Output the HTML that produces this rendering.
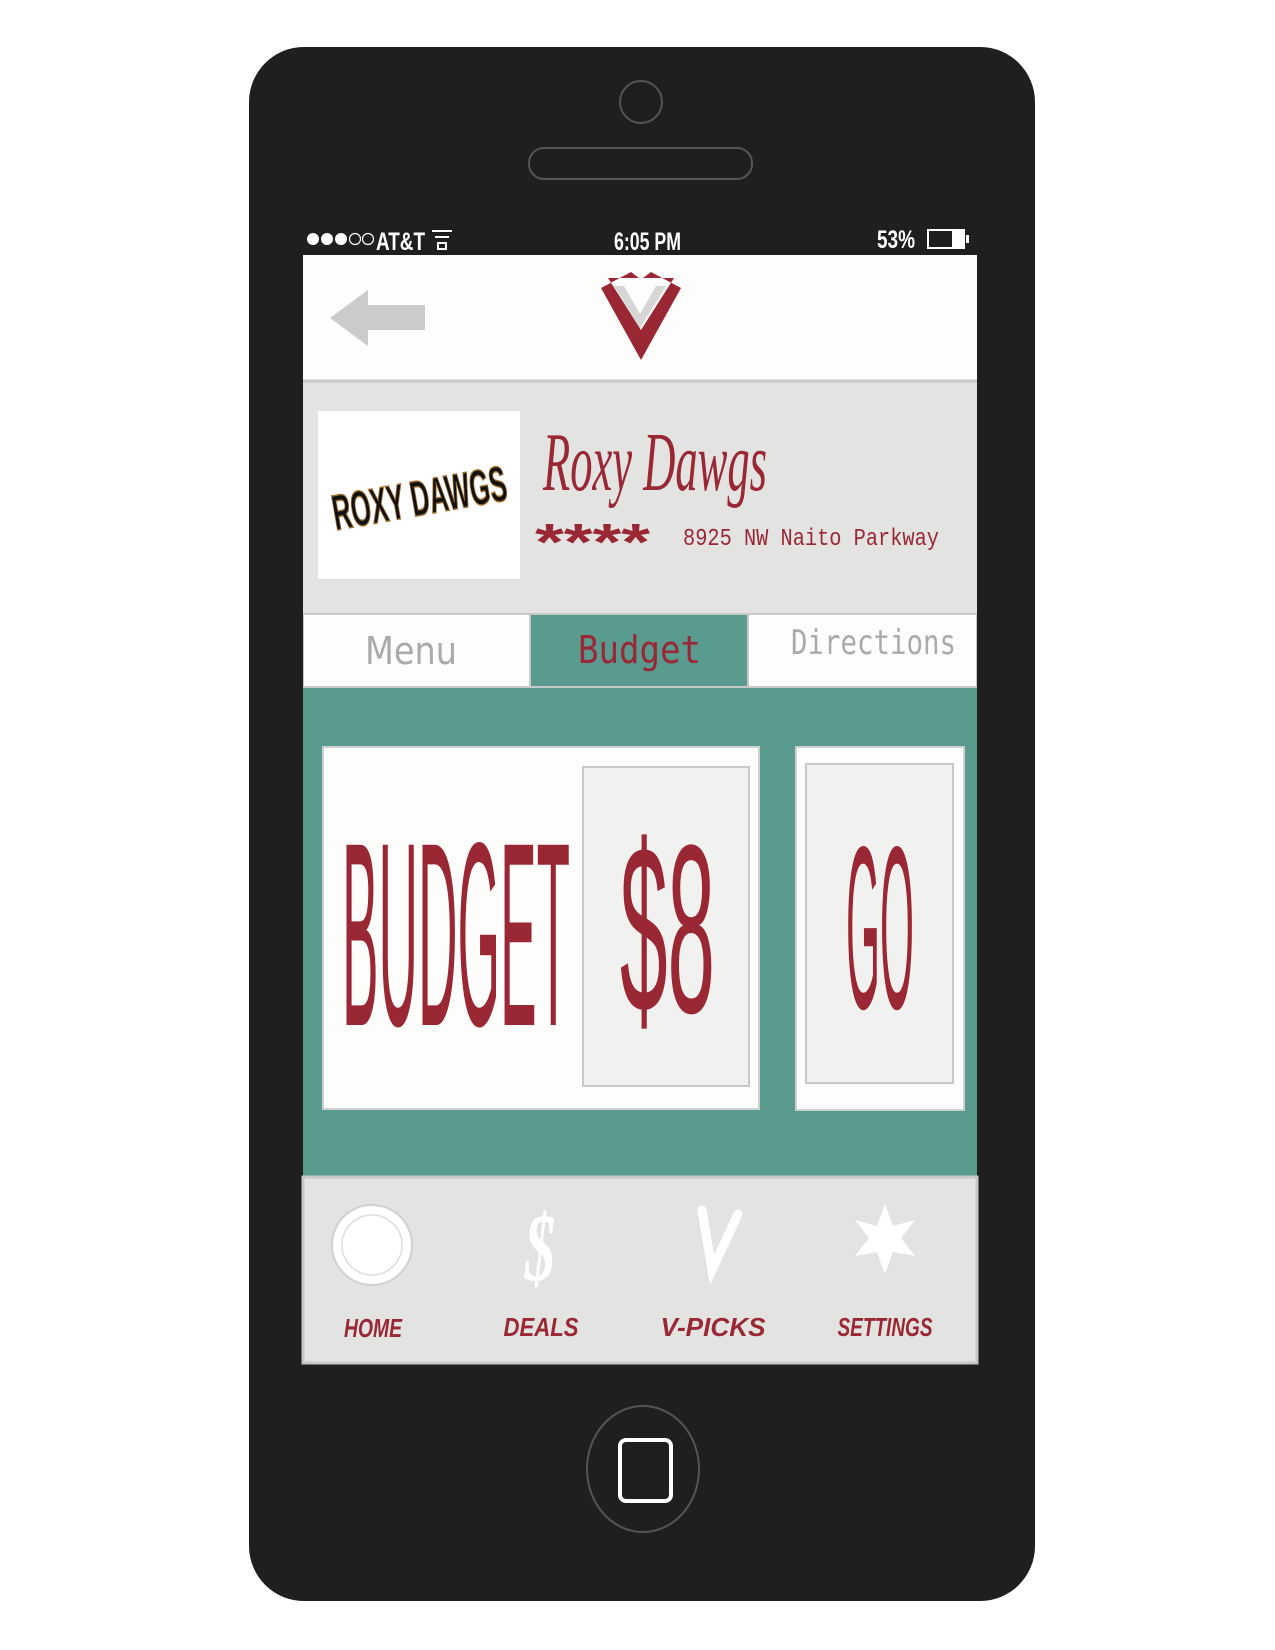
<!DOCTYPE html>
<html><head><meta charset="utf-8"><style>html,body{margin:0;padding:0;background:#fff}svg{display:block}</style></head><body>
<svg width="1275" height="1650" viewBox="0 0 1275 1650" xmlns="http://www.w3.org/2000/svg">
<rect x="249" y="47" width="786" height="1554" rx="55" fill="#1f1f1f"/>
<circle cx="641" cy="102" r="21" fill="none" stroke="#555" stroke-width="2"/>
<rect x="529" y="148" width="223" height="31" rx="15" fill="none" stroke="#555" stroke-width="2"/>
<g font-family="Liberation Sans, sans-serif" fill="#fff" font-size="25" font-weight="bold">
<circle cx="313" cy="239" r="6"/><circle cx="327" cy="239" r="6"/><circle cx="341" cy="239" r="6"/>
<circle cx="355" cy="239" r="5.5" fill="none" stroke="#fff" stroke-width="1.2"/><circle cx="368" cy="239" r="5.5" fill="none" stroke="#fff" stroke-width="1.2"/>
<text x="376" y="250" textLength="49" lengthAdjust="spacingAndGlyphs">AT&amp;T</text>
<path d="M432 231h20M435 237h14M438 243h8v6h-8z" stroke="#fff" stroke-width="2" fill="none"/>
<text x="614" y="250" textLength="67" lengthAdjust="spacingAndGlyphs">6:05 PM</text>
<text x="877" y="248" textLength="38" lengthAdjust="spacingAndGlyphs">53%</text>
<rect x="928" y="230" width="36" height="18" fill="none" stroke="#fff" stroke-width="2"/>
<rect x="952" y="231" width="11" height="16"/><rect x="966" y="235" width="3" height="8"/>
</g>
<rect x="303" y="255" width="674" height="125" fill="#fdfdfc"/>
<path d="M330 318l38-28v15h57v25h-57v16z" fill="#cbcbcb"/>
<path d="M601 288l30-16 8 6-31 0 33 52 33-52-31 0 8-6 30 16-40 72z" fill="#9a2734"/>
<path d="M614 286l26 42 26-42-10 0-16 28-16-28z" fill="#d6d6d6"/>
<rect x="303" y="380" width="674" height="233" fill="#e3e3e2"/>
<line x1="303" y1="381" x2="977" y2="381" stroke="#c8c8c8" stroke-width="3"/>
<rect x="318" y="411" width="202" height="168" fill="#fff"/>
<text x="330" y="515" font-family="Liberation Sans, sans-serif" font-weight="bold" font-size="50" fill="#111" stroke="#a07030" stroke-width="1.5" textLength="176" lengthAdjust="spacingAndGlyphs" transform="rotate(-10 420 490)">ROXY DAWGS</text>
<text x="543" y="490" font-family="Liberation Serif, serif" font-style="italic" font-size="84" fill="#9a2734" textLength="224" lengthAdjust="spacingAndGlyphs">Roxy Dawgs</text>
<text x="535" y="560" font-family="Liberation Sans, sans-serif" font-weight="bold" font-size="52" fill="#9a2734" textLength="115" lengthAdjust="spacingAndGlyphs">****</text>
<text x="683" y="545" font-family="Liberation Mono, monospace" font-size="24" fill="#9a2734" textLength="256" lengthAdjust="spacingAndGlyphs">8925 NW Naito Parkway</text>
<rect x="303" y="613" width="674" height="75" fill="#c8c8c8"/>
<rect x="304" y="615" width="225" height="71" fill="#fdfdfc"/>
<rect x="531" y="615" width="216" height="71" fill="#5a9b8f"/>
<rect x="749" y="615" width="227" height="71" fill="#fdfdfc"/>
<text x="365" y="664" font-family="DejaVu Sans, sans-serif" font-size="38" fill="#aaa" textLength="92" lengthAdjust="spacingAndGlyphs">Menu</text>
<text x="578" y="663" font-family="DejaVu Sans Mono, monospace" font-size="38" fill="#9a2734" textLength="123" lengthAdjust="spacingAndGlyphs">Budget</text>
<text x="791" y="654" font-family="DejaVu Sans Mono, monospace" font-size="34" fill="#aaa" textLength="165" lengthAdjust="spacingAndGlyphs">Directions</text>
<rect x="303" y="688" width="674" height="489" fill="#5a9b8f"/>
<rect x="323" y="747" width="436" height="362" fill="#fdfdfc" stroke="#d0d0d0" stroke-width="2"/>
<rect x="583" y="767" width="166" height="319" fill="#f1f1ef" stroke="#c8c8c8" stroke-width="2"/>
<text x="342" y="1025" font-family="Liberation Sans, sans-serif" font-size="262" fill="#9a2734" textLength="228" lengthAdjust="spacingAndGlyphs">BUDGET</text>
<text x="620" y="1012" font-family="Liberation Sans, sans-serif" font-size="240" fill="#9a2734" textLength="95" lengthAdjust="spacingAndGlyphs">$8</text>
<rect x="796" y="747" width="168" height="363" fill="#fdfdfc" stroke="#d0d0d0" stroke-width="2"/>
<rect x="806" y="764" width="147" height="319" fill="#f1f1ef" stroke="#c8c8c8" stroke-width="2"/>
<text x="846" y="1008" font-family="Liberation Sans, sans-serif" font-size="232" fill="#9a2734" textLength="68" lengthAdjust="spacingAndGlyphs">GO</text>
<rect x="303" y="1177" width="674" height="186" fill="#e3e3e2" stroke="#c8c8c8" stroke-width="3"/>
<circle cx="372" cy="1245" r="40" fill="#fff" stroke="#d0d0d0" stroke-width="2"/>
<circle cx="372" cy="1245" r="30" fill="#fff" stroke="#ddd" stroke-width="1.5"/>
<text x="525" y="1280" font-family="Liberation Serif, serif" font-style="italic" font-weight="bold" font-size="96" fill="#fff" textLength="30" lengthAdjust="spacingAndGlyphs">$</text>
<path d="M702 1210l10 60 26-56" stroke="#fff" stroke-width="9" fill="none" stroke-linecap="round"/>
<path d="M885 1204l8 22 22-6-14 18 14 18-22-4-8 22-8-22-22 4 14-18-14-18 22 6z" fill="#fff"/>
<g font-family="Liberation Sans, sans-serif" font-style="italic" font-weight="bold" font-size="26" fill="#9a2734" text-anchor="middle">
<text x="373" y="1337" textLength="58" lengthAdjust="spacingAndGlyphs">HOME</text>
<text x="541" y="1336" textLength="75" lengthAdjust="spacingAndGlyphs">DEALS</text>
<text x="713" y="1336" textLength="105" lengthAdjust="spacingAndGlyphs">V-PICKS</text>
<text x="885" y="1336" textLength="95" lengthAdjust="spacingAndGlyphs">SETTINGS</text>
</g>
<ellipse cx="643" cy="1469" rx="56" ry="63" fill="none" stroke="#555" stroke-width="2"/>
<rect x="620" y="1440" width="51" height="61" rx="6" fill="none" stroke="#fff" stroke-width="4"/>
</svg>
</body></html>
